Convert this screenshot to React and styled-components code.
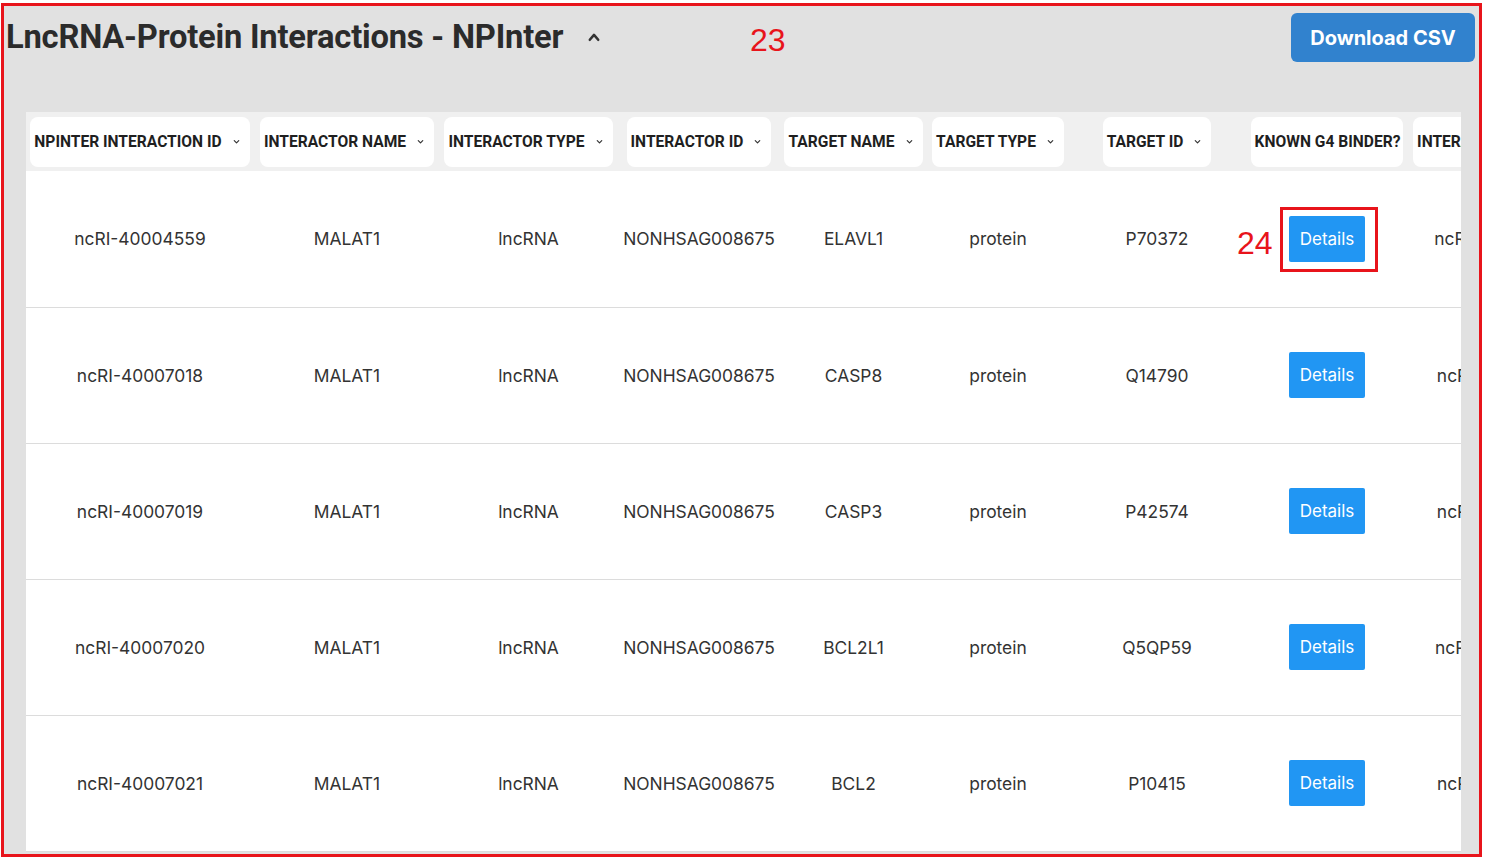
import React from "react";
import styled, { createGlobalStyle } from "styled-components";

const GlobalStyle = createGlobalStyle`
  html, body {
    margin: 0;
    padding: 0;
    background: #ffffff;
  }
  body {
    font-family: Inter, "Liberation Sans", sans-serif;
  }
`;

const Frame = styled.div`
  position: relative;
  margin: 3px 0 0 1px;
  width: 1481px;
  height: 854px;
  box-sizing: border-box;
  border: 3px solid #e8141b;
  background: #e1e1e1;
  overflow: hidden;
`;

const TopBar = styled.div`
  display: flex;
  align-items: flex-start;
  justify-content: space-between;
  padding: 6px 4px 0 2px;
  height: 106px;
  box-sizing: border-box;
`;

const Title = styled.h2`
  display: flex;
  align-items: center;
  gap: 24px;
  margin: 6px 0 0;
  font-family: Roboto, "Liberation Sans", sans-serif;
  font-size: 32.7px;
  font-weight: 700;
  color: #2b2b2b;
  letter-spacing: -0.2px;
`;

const CsvButton = styled.button`
  margin-top: 1px;
  width: 184px;
  height: 49px;
  border: 0;
  border-radius: 6px;
  background: #3182ce;
  color: #ffffff;
  font-family: Inter, "Liberation Sans", sans-serif;
  font-size: 20px;
  font-weight: 700;
`;

const Note = styled.span`
  position: absolute;
  left: ${(p) => p.x}px;
  top: ${(p) => p.y}px;
  color: #e8141b;
  font-family: "Liberation Sans", sans-serif;
  font-size: 32px;
  line-height: 1;
`;

const Mark = styled.div`
  position: absolute;
  left: 1276px;
  top: 201px;
  width: 98px;
  height: 65px;
  box-sizing: border-box;
  border: 3px solid #e8141b;
`;

const TableWrap = styled.div`
  margin: 0 18px 0 22px;
  overflow: hidden;
  background: #ffffff;
`;

const Table = styled.table`
  width: 1564px;
  table-layout: fixed;
  border-collapse: collapse;
`;

const HeadRow = styled.tr`
  background: #f0f0f0;
  height: 59px;
`;

const Th = styled.th`
  padding: 0;
  text-align: center;
`;

const Chip = styled.span`
  display: inline-flex;
  align-items: center;
  gap: 10px;
  height: 50px;
  padding: 0 ${(p) => (p.plain ? "3px" : "9px")} 0 4px;
  border-radius: 8px;
  background: #ffffff;
  font-family: Roboto, "Liberation Sans", sans-serif;
  font-size: 15.6px;
  font-weight: 700;
  color: #1f1f1f;
  white-space: nowrap;
`;

const Row = styled.tr`
  height: 136px;
  border-bottom: 1px solid #dcdcdc;
`;

const Td = styled.td`
  padding: 0;
  text-align: center;
  font-size: 17.4px;
  color: #333333;
  white-space: nowrap;
  overflow: hidden;
`;

const DetailsButton = styled.button`
  width: 76px;
  height: 46px;
  border: 0;
  border-radius: 2px;
  background: #2196f3;
  color: #ffffff;
  font-family: Inter, "Liberation Sans", sans-serif;
  font-size: 17px;
`;

const Chevron = ({ up }) => (
  <svg width={up ? 14 : 9} height={up ? 14 : 9} viewBox="0 0 10 10" fill="none">
    <path
      d={up ? "M2 7 L5 3.5 L8 7" : "M2.5 4 L5 6.5 L7.5 4"}
      stroke="#333"
      strokeWidth={up ? 1.8 : 1.3}
      strokeLinecap="round"
      strokeLinejoin="round"
    />
  </svg>
);

const columns = [
  { label: "NPINTER INTERACTION ID", width: 228 },
  { label: "INTERACTOR NAME", width: 186 },
  { label: "INTERACTOR TYPE", width: 177 },
  { label: "INTERACTOR ID", width: 164 },
  { label: "TARGET NAME", width: 145 },
  { label: "TARGET TYPE", width: 144 },
  { label: "TARGET ID", width: 174 },
  { label: "KNOWN G4 BINDER?", width: 166, plain: true },
  { label: "INTERACTION TYPE", width: 180 },
];

const rows = [
  ["ncRI-40004559", "ELAVL1", "P70372"],
  ["ncRI-40007018", "CASP8", "Q14790"],
  ["ncRI-40007019", "CASP3", "P42574"],
  ["ncRI-40007020", "BCL2L1", "Q5QP59"],
  ["ncRI-40007021", "BCL2", "P10415"],
];

const App = () => (
  <>
    <GlobalStyle />
    <Frame>
      <TopBar>
        <Title>
          LncRNA-Protein Interactions - NPInter
          <Chevron up />
        </Title>
        <CsvButton>Download CSV</CsvButton>
      </TopBar>
      <TableWrap>
        <Table>
          <colgroup>
            {columns.map((c) => (
              <col key={c.label} style={{ width: c.width }} />
            ))}
          </colgroup>
          <thead>
            <HeadRow>
              {columns.map((c) => (
                <Th key={c.label}>
                  <Chip plain={c.plain}>
                    {c.label}
                    {!c.plain && <Chevron />}
                  </Chip>
                </Th>
              ))}
            </HeadRow>
          </thead>
          <tbody>
            {rows.map(([id, target, targetId]) => (
              <Row key={id}>
                <Td>{id}</Td>
                <Td>MALAT1</Td>
                <Td>lncRNA</Td>
                <Td>NONHSAG008675</Td>
                <Td>{target}</Td>
                <Td>protein</Td>
                <Td>{targetId}</Td>
                <Td>
                  <DetailsButton>Details</DetailsButton>
                </Td>
                <Td>{id}</Td>
              </Row>
            ))}
          </tbody>
        </Table>
      </TableWrap>
      <Note x={746} y={18}>23</Note>
      <Note x={1233} y={221}>24</Note>
      <Mark />
    </Frame>
  </>
);

export default App;
